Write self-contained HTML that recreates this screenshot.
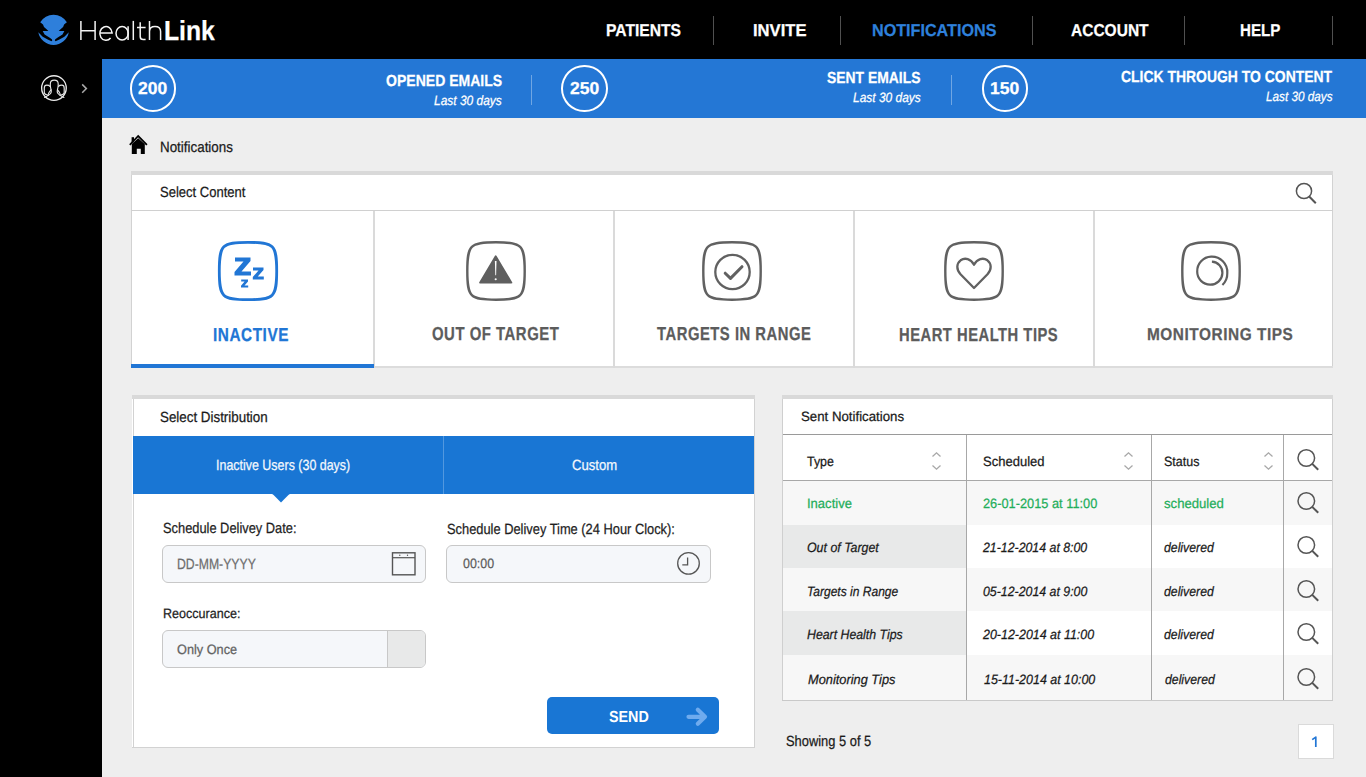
<!DOCTYPE html>
<html><head><meta charset="utf-8"><title>HealthLink Notifications</title>
<style>
html,body{margin:0;padding:0;width:1366px;height:777px;overflow:hidden;background:#eeeeee;}
body{position:relative;font-family:"Liberation Sans",sans-serif;}
.r{position:absolute;box-sizing:content-box;}
.t{position:absolute;white-space:nowrap;transform-origin:0 0;text-rendering:geometricPrecision;-webkit-text-stroke:0.25px currentColor;}
svg.r{overflow:visible;}
</style></head><body>
<div class="r" style="left:0px;top:0px;width:1366px;height:777px;background:#eeeeee;"></div>
<div class="r" style="left:0px;top:0px;width:1366px;height:59px;background:#000;"></div>
<div class="r" style="left:0px;top:59px;width:102px;height:718px;background:#000;"></div>
<div class="r" style="left:102px;top:59px;width:1264px;height:59px;background:#2477d5;"></div>
<svg class="r" style="left:0px;top:0px" width="180" height="59" viewBox="0 0 180 59">
<path fill="#2e7fdb" d="M40.2 22.3 A15.6 15.6 0 0 1 66.9 22.3 L64.1 24.4 L63.1 27.0 L61.1 28.7 L58.7 31.0 L64.4 31.0 L62.5 34.6 L58.1 37.2 L55.3 39.2 L54.8 40.3 L55.5 41.3 L59.4 39.4 L64.4 36.7 L68.8 32.2 A15.5 15.5 0 0 1 38.3 32.2 L42.7 36.7 L47.7 39.4 L51.6 41.3 L52.3 40.3 L51.8 39.2 L49.0 37.2 L44.6 34.6 L42.7 31.0 L48.4 31.0 L46.0 28.7 L44.0 27.0 L43.0 24.4 Z"/>
<g fill="none" stroke="#f4f4f4" stroke-width="1.5">
<path d="M80.9 20.9 V40 M95.1 20.9 V40 M80.9 30.8 H95.1"/>
<path d="M99.8 32.9 H112.1 A6.15 6.9 0 1 0 110.6 38.0"/>
<ellipse cx="122.1" cy="33.3" rx="6.1" ry="6.8"/>
<path d="M128.1 26.3 V40"/>
<path d="M133.3 20.9 V40"/>
<path d="M140.2 22.3 V36.5 Q140.2 39.6 143.2 39.6 H145.6 M137 27.4 H145.6"/>
<path d="M149.5 20.9 V40 M149.5 31.5 Q149.5 26.4 155 26.4 Q160.6 26.4 160.6 31.5 V40"/>
</g>
</svg>
<span class="t" style="left:163.70px;top:17px;font-size:27.5px;line-height:27.5px;color:#ffffff;font-weight:700;transform:scaleX(0.8994);">Link</span>
<span class="t" style="left:606.00px;top:22px;font-size:17.25px;line-height:17.25px;color:#fff;font-weight:700;transform:scaleX(0.9066);">PATIENTS</span>
<span class="t" style="left:752.50px;top:22px;font-size:17.25px;line-height:17.25px;color:#fff;font-weight:700;transform:scaleX(0.9623);">INVITE</span>
<span class="t" style="left:872.30px;top:22px;font-size:17.25px;line-height:17.25px;color:#2e80dc;font-weight:700;transform:scaleX(0.9362);">NOTIFICATIONS</span>
<span class="t" style="left:1071.00px;top:22px;font-size:17.25px;line-height:17.25px;color:#fff;font-weight:700;transform:scaleX(0.8997);">ACCOUNT</span>
<span class="t" style="left:1240.20px;top:22px;font-size:17.25px;line-height:17.25px;color:#fff;font-weight:700;transform:scaleX(0.8782);">HELP</span>
<div class="r" style="left:712.5px;top:16px;width:1px;height:29px;background:#505050;"></div>
<div class="r" style="left:839.5px;top:16px;width:1px;height:29px;background:#505050;"></div>
<div class="r" style="left:1031.5px;top:16px;width:1px;height:29px;background:#505050;"></div>
<div class="r" style="left:1183.5px;top:16px;width:1px;height:29px;background:#505050;"></div>
<div class="r" style="left:1331.5px;top:16px;width:1px;height:29px;background:#505050;"></div>
<svg class="r" style="left:30px;top:65px" width="70" height="45" viewBox="30 65 70 45">
<circle cx="53.95" cy="88.05" r="12.3" fill="none" stroke="#ececec" stroke-width="1.35"/>
<g fill="none" stroke="#e6e6e6" stroke-width="1.15" stroke-linecap="round" stroke-linejoin="round">
<path d="M44.6 97.4 C47.5 95.8 50.6 94.8 51.2 92.2 C51.6 90.5 50.3 88 50.3 85 L50.3 84 C50.3 81.5 52 80.1 54.25 80.1 C56.5 80.1 58.2 81.5 58.2 84 L58.2 85 C58.2 88 56.9 90.5 57.3 92.2 C57.9 94.8 61 95.8 63.9 97.4"/>
<path d="M50 86.3 C49.4 85.5 48.3 85.1 46.7 85.1 C45 85.1 44.3 86.3 44.3 88 L44.3 92.5 C44.3 94 45.3 94.5 46.8 94.8 L48.5 95.4"/>
<path d="M51 89.8 C50 91 48.5 92.5 48.3 94.2"/>
<path d="M58.5 86.3 C59.1 85.5 60.2 85.1 61.8 85.1 C63.5 85.1 64.2 86.3 64.2 88 L64.2 92.5 C64.2 94 63.2 94.5 61.7 94.8 L60 95.4"/>
<path d="M57.5 89.8 C58.5 91 60 92.5 60.2 94.2"/>
</g>
<path d="M82.2 84.4 L86.4 88.6 L82.2 92.8" fill="none" stroke="#a8a8a8" stroke-width="1.5"/>
</svg>
<div class="r" style="left:129.8px;top:65px;width:42.4px;height:42.6px;border:2px solid #fff;border-radius:50%"></div>
<span class="t" style="left:138.40px;top:80px;font-size:17.25px;line-height:17.25px;color:#fff;font-weight:700;transform:scaleX(1.0148);">200</span>
<div class="r" style="left:561.4px;top:65px;width:42.4px;height:42.6px;border:2px solid #fff;border-radius:50%"></div>
<span class="t" style="left:570.00px;top:80px;font-size:17.25px;line-height:17.25px;color:#fff;font-weight:700;transform:scaleX(1.0148);">250</span>
<div class="r" style="left:981.6px;top:65px;width:42.4px;height:42.6px;border:2px solid #fff;border-radius:50%"></div>
<span class="t" style="left:990.20px;top:80px;font-size:17.25px;line-height:17.25px;color:#fff;font-weight:700;transform:scaleX(1.0148);">150</span>
<span class="t" style="left:385.60px;top:74px;font-size:16.0px;line-height:16.0px;color:#fff;font-weight:700;transform:scaleX(0.8772);">OPENED EMAILS</span>
<span class="t" style="left:434.00px;top:94px;font-size:13.5px;line-height:13.5px;color:#fff;font-style:italic;transform:scaleX(0.8858);">Last 30 days</span>
<div class="r" style="left:531px;top:75px;width:1px;height:30px;background:rgba(255,255,255,0.35);"></div>
<span class="t" style="left:827.00px;top:71px;font-size:16.0px;line-height:16.0px;color:#fff;font-weight:700;transform:scaleX(0.8683);">SENT EMAILS</span>
<span class="t" style="left:852.60px;top:91px;font-size:13.5px;line-height:13.5px;color:#fff;font-style:italic;transform:scaleX(0.8858);">Last 30 days</span>
<div class="r" style="left:951px;top:75px;width:1px;height:30px;background:rgba(255,255,255,0.35);"></div>
<span class="t" style="left:1121.00px;top:70px;font-size:16.0px;line-height:16.0px;color:#fff;font-weight:700;transform:scaleX(0.8710);">CLICK THROUGH TO CONTENT</span>
<span class="t" style="left:1265.50px;top:90px;font-size:13.5px;line-height:13.5px;color:#fff;font-style:italic;transform:scaleX(0.8688);">Last 30 days</span>
<svg class="r" style="left:128px;top:134px" width="22" height="22" viewBox="0 0 22 22">
<path d="M1.8 10.8 L10.2 2 L18.9 10.8" fill="none" stroke="#000" stroke-width="1.8"/>
<path d="M3.8 10 L10.2 4.2 L16.8 10 L16.8 20 L12.8 20 L12.8 14.8 L8.8 14.8 L8.8 20 L3.8 20 Z" fill="#000"/>
<rect x="3.6" y="3.2" width="2.4" height="5" fill="#000"/>
</svg>
<span class="t" style="left:160.00px;top:141px;font-size:14.75px;line-height:14.75px;color:#1a1a1a;transform:scaleX(0.9074);">Notifications</span>
<div class="r" style="left:131px;top:171px;width:1202px;height:197px;background:#fff;"></div>
<div class="r" style="left:131px;top:171px;width:1202px;height:4px;background:#d9d9d9;"></div>
<div class="r" style="left:131px;top:175px;width:1px;height:193px;background:#d2d2d2;"></div>
<div class="r" style="left:1332px;top:175px;width:1px;height:193px;background:#d2d2d2;"></div>
<div class="r" style="left:131px;top:210px;width:1202px;height:1px;background:#d0d0d0;"></div>
<div class="r" style="left:131px;top:366px;width:1202px;height:2px;background:#dcdcdc;"></div>
<div class="r" style="left:373px;top:211px;width:2px;height:157px;background:#dadada;"></div>
<div class="r" style="left:613px;top:211px;width:2px;height:157px;background:#dadada;"></div>
<div class="r" style="left:853px;top:211px;width:2px;height:157px;background:#dadada;"></div>
<div class="r" style="left:1093px;top:211px;width:2px;height:157px;background:#dadada;"></div>
<div class="r" style="left:131px;top:364px;width:243px;height:4px;background:#2176d5;"></div>
<span class="t" style="left:159.60px;top:186px;font-size:14.75px;line-height:14.75px;color:#1a1a1a;transform:scaleX(0.8826);">Select Content</span>
<svg class="r" style="left:1292px;top:180px" width="28" height="28" viewBox="0 0 28 28">
<circle cx="12" cy="11" r="7.6" fill="none" stroke="#555" stroke-width="1.5"/>
<path d="M17.2 16.5 L23.8 23.2" stroke="#555" stroke-width="2"/>
</svg>
<svg class="r" style="left:218px;top:241px" width="60" height="60" viewBox="0 0 60 60"><path d="M30 1.3 C56.1 1.3 58.7 3.9 58.7 30 C58.7 56.1 56.1 58.7 30 58.7 C3.9 58.7 1.3 56.1 1.3 30 C1.3 3.9 3.9 1.3 30 1.3 Z" fill="none" stroke="#2176d5" stroke-width="2.8"/><g fill="#2176d5">
<path d="M17 16.5 L32.5 16.5 L32.5 20 L23.5 30.5 L33 30.5 L33 34.5 L16.5 34.5 L16.5 31 L25.5 20.5 L17 20.5 Z"/>
<path d="M35 26.5 L45.5 26.5 L45.5 29 L39.8 35.6 L45.8 35.6 L45.8 38.6 L34.8 38.6 L34.8 36 L40.5 29.5 L35 29.5 Z"/>
<path d="M23.2 38.6 L30 38.6 L30 40.5 L26.5 44.5 L30.2 44.5 L30.2 46.5 L23 46.5 L23 44.8 L26.6 40.6 L23.2 40.6 Z"/>
</g></svg>
<svg class="r" style="left:466px;top:241px" width="60" height="60" viewBox="0 0 60 60"><path d="M30 1.3 C56.1 1.3 58.7 3.9 58.7 30 C58.7 56.1 56.1 58.7 30 58.7 C3.9 58.7 1.3 56.1 1.3 30 C1.3 3.9 3.9 1.3 30 1.3 Z" fill="none" stroke="#616161" stroke-width="2.4"/><path d="M29.7 15.2 L45.4 41.6 L14 41.6 Z" fill="#5f5f5f" stroke="#5f5f5f" stroke-width="1.8" stroke-linejoin="round"/>
<path d="M28.9 20 L30.5 20 L30.1 34.2 L29.3 34.2 Z" fill="#fff"/><circle cx="29.7" cy="38.2" r="1.05" fill="#fff"/></svg>
<svg class="r" style="left:702px;top:241px" width="60" height="60" viewBox="0 0 60 60"><path d="M30 1.3 C56.1 1.3 58.7 3.9 58.7 30 C58.7 56.1 56.1 58.7 30 58.7 C3.9 58.7 1.3 56.1 1.3 30 C1.3 3.9 3.9 1.3 30 1.3 Z" fill="none" stroke="#616161" stroke-width="2.4"/><circle cx="30.5" cy="31" r="17.2" fill="none" stroke="#616161" stroke-width="2.3"/>
<path d="M23.2 32.2 L28.5 37.4 L40 25.7" fill="none" stroke="#616161" stroke-width="3" stroke-linecap="round" stroke-linejoin="round"/></svg>
<svg class="r" style="left:944px;top:241px" width="60" height="60" viewBox="0 0 60 60"><path d="M30 1.3 C56.1 1.3 58.7 3.9 58.7 30 C58.7 56.1 56.1 58.7 30 58.7 C3.9 58.7 1.3 56.1 1.3 30 C1.3 3.9 3.9 1.3 30 1.3 Z" fill="none" stroke="#616161" stroke-width="2.4"/><path d="M30 47 L16.5 33.2 C12.2 28.8 12.3 22.5 16.6 19.3 C21 16.2 26.8 17.8 30 23.8 C33.2 17.8 39 16.2 43.4 19.3 C47.7 22.5 47.8 28.8 43.5 33.2 Z" fill="none" stroke="#616161" stroke-width="2.3" stroke-linejoin="round"/></svg>
<svg class="r" style="left:1181px;top:241px" width="60" height="60" viewBox="0 0 60 60"><path d="M30 1.3 C56.1 1.3 58.7 3.9 58.7 30 C58.7 56.1 56.1 58.7 30 58.7 C3.9 58.7 1.3 56.1 1.3 30 C1.3 3.9 3.9 1.3 30 1.3 Z" fill="none" stroke="#616161" stroke-width="2.4"/><path d="M30.9 20.6 A11 11 0 0 1 41.4 32.1 A12 12 0 0 1 29.3 43.7 A13 13 0 0 1 16.2 30.6 A14.5 14.5 0 0 1 30.1 15.7 A15.5 15.5 0 0 1 46.3 32.1 A16 16 0 0 1 41.4 44" fill="none" stroke="#5f5f5f" stroke-width="2.2"/></svg>
<span class="t" style="left:213.30px;top:326px;font-size:18.75px;line-height:18.75px;color:#2176d5;font-weight:700;transform:scaleX(0.8187);letter-spacing:0.656px;">INACTIVE</span>
<span class="t" style="left:432.00px;top:325px;font-size:18.75px;line-height:18.75px;color:#5c5c5c;font-weight:700;transform:scaleX(0.7945);letter-spacing:0.656px;">OUT OF TARGET</span>
<span class="t" style="left:656.80px;top:325px;font-size:18.75px;line-height:18.75px;color:#5c5c5c;font-weight:700;transform:scaleX(0.7895);letter-spacing:0.656px;">TARGETS IN RANGE</span>
<span class="t" style="left:899.30px;top:326px;font-size:18.75px;line-height:18.75px;color:#5c5c5c;font-weight:700;transform:scaleX(0.7863);letter-spacing:0.656px;">HEART HEALTH TIPS</span>
<span class="t" style="left:1146.50px;top:326px;font-size:17.25px;line-height:17.25px;color:#5c5c5c;font-weight:700;transform:scaleX(0.8923);letter-spacing:0.604px;">MONITORING TIPS</span>
<div class="r" style="left:132px;top:395px;width:623px;height:353px;background:#fff;"></div>
<div class="r" style="left:132px;top:395px;width:623px;height:4px;background:#d9d9d9;"></div>
<div class="r" style="left:133px;top:399px;width:1px;height:349px;background:#d2d2d2;"></div>
<div class="r" style="left:754px;top:399px;width:1px;height:349px;background:#d2d2d2;"></div>
<div class="r" style="left:132px;top:747px;width:623px;height:1px;background:#d2d2d2;"></div>
<span class="t" style="left:159.60px;top:411px;font-size:14.75px;line-height:14.75px;color:#1a1a1a;transform:scaleX(0.9060);">Select Distribution</span>
<div class="r" style="left:133px;top:436px;width:621px;height:58px;background:#1976d4;"></div>
<div class="r" style="left:443px;top:436px;width:1px;height:58px;background:rgba(255,255,255,0.25);"></div>
<svg class="r" style="left:272px;top:493px" width="18" height="10" viewBox="0 0 18 10"><path d="M0.6 1 L17.4 1 L9 9.6 Z" fill="#1976d4"/><rect x="0" y="0" width="18" height="1.2" fill="#1976d4"/></svg>
<span class="t" style="left:215.90px;top:459px;font-size:14.75px;line-height:14.75px;color:#f4f8fd;transform:scaleX(0.8438);">Inactive Users (30 days)</span>
<span class="t" style="left:571.50px;top:459px;font-size:14.75px;line-height:14.75px;color:#f4f8fd;transform:scaleX(0.8895);">Custom</span>
<span class="t" style="left:162.70px;top:522px;font-size:14.75px;line-height:14.75px;color:#1e1e1e;transform:scaleX(0.8707);">Schedule Delivey Date:</span>
<span class="t" style="left:447.00px;top:523px;font-size:14.75px;line-height:14.75px;color:#1e1e1e;transform:scaleX(0.8715);">Schedule Delivey Time (24 Hour Clock):</span>
<div class="r" style="left:162px;top:545px;width:262px;height:36px;border:1px solid #c8c8c8;border-radius:6px;background:#f5f7fa"></div>
<div class="r" style="left:446px;top:544.5px;width:263px;height:36px;border:1px solid #c8c8c8;border-radius:6px;background:#f5f7fa"></div>
<span class="t" style="left:177.40px;top:558px;font-size:14.75px;line-height:14.75px;color:#6e6e6e;transform:scaleX(0.8290);">DD-MM-YYYY</span>
<span class="t" style="left:462.60px;top:557px;font-size:13.5px;line-height:13.5px;color:#5e5e5e;transform:scaleX(0.9207);">00:00</span>
<svg class="r" style="left:390px;top:550px" width="28" height="28" viewBox="0 0 28 28">
<rect x="2.5" y="2.8" width="22.5" height="22" fill="none" stroke="#555" stroke-width="1.4"/>
<path d="M2.5 7.7 L25 7.7" stroke="#555" stroke-width="1.2"/>
<circle cx="9.8" cy="5.3" r="0.7" fill="#555"/><circle cx="17.5" cy="5.3" r="0.7" fill="#555"/>
</svg>
<svg class="r" style="left:675px;top:550px" width="28" height="28" viewBox="0 0 28 28">
<circle cx="13.5" cy="13.4" r="10.8" fill="none" stroke="#555" stroke-width="1.3"/>
<path d="M12.6 7.6 L12.6 14.8 L7.3 14.8" fill="none" stroke="#555" stroke-width="1.3"/>
</svg>
<span class="t" style="left:162.70px;top:607px;font-size:13.5px;line-height:13.5px;color:#1e1e1e;transform:scaleX(0.9304);">Reoccurance:</span>
<div class="r" style="left:162px;top:630.4px;width:262px;height:35.5px;border:1px solid #c8c8c8;border-radius:6px;background:#f5f7fa;overflow:hidden"><div style="position:absolute;left:224px;top:0;width:38px;height:36px;background:#e8e9e9;border-left:1px solid #c8c8c8"></div></div>
<span class="t" style="left:177.40px;top:643px;font-size:13.5px;line-height:13.5px;color:#636363;transform:scaleX(0.9424);">Only Once</span>
<div class="r" style="left:546.7px;top:697.2px;width:172px;height:37px;border-radius:5px;background:#1976d4"></div>
<span class="t" style="left:609.00px;top:710px;font-size:16.0px;line-height:16.0px;color:#fff;font-weight:700;transform:scaleX(0.8943);-webkit-text-stroke:0;">SEND</span>
<svg class="r" style="left:684px;top:705px" width="26" height="24" viewBox="0 0 26 24">
<path d="M4.5 11.8 L20.5 11.8 M13.8 4.8 L21 11.8 L13.8 18.8" fill="none" stroke="#6fabee" stroke-width="4.2" stroke-linecap="round" stroke-linejoin="round"/>
</svg>
<div class="r" style="left:782px;top:395px;width:551px;height:306px;background:#fff;"></div>
<div class="r" style="left:782px;top:395px;width:551px;height:4px;background:#d9d9d9;"></div>
<div class="r" style="left:782px;top:399px;width:1px;height:302px;background:#cfcfcf;"></div>
<div class="r" style="left:1332px;top:399px;width:1px;height:302px;background:#cfcfcf;"></div>
<span class="t" style="left:800.90px;top:410px;font-size:13.5px;line-height:13.5px;color:#1a1a1a;transform:scaleX(0.9814);">Sent Notifications</span>
<div class="r" style="left:783px;top:434px;width:549px;height:1px;background:#9a9a9a;"></div>
<div class="r" style="left:783px;top:481px;width:549px;height:43.5px;background:#f7f7f7;"></div>
<div class="r" style="left:783px;top:524.5px;width:183.5px;height:43.0px;background:#e8e9e9;"></div>
<div class="r" style="left:783px;top:567.5px;width:549px;height:43.5px;background:#f7f7f7;"></div>
<div class="r" style="left:783px;top:611px;width:183.5px;height:44px;background:#e8e9e9;"></div>
<div class="r" style="left:783px;top:655px;width:549px;height:45px;background:#f7f7f7;"></div>
<div class="r" style="left:783px;top:480px;width:549px;height:1px;background:#a8a8a8;"></div>
<div class="r" style="left:782px;top:700px;width:551px;height:1px;background:#c9c9c9;"></div>
<div class="r" style="left:966px;top:435px;width:1px;height:265px;background:#a8a8a8;"></div>
<div class="r" style="left:1151px;top:435px;width:1px;height:265px;background:#a8a8a8;"></div>
<div class="r" style="left:1283px;top:435px;width:1px;height:265px;background:#a8a8a8;"></div>
<span class="t" style="left:807.30px;top:455px;font-size:13.5px;line-height:13.5px;color:#1a1a1a;transform:scaleX(0.9191);">Type</span>
<span class="t" style="left:982.80px;top:455px;font-size:13.5px;line-height:13.5px;color:#1a1a1a;transform:scaleX(0.9639);">Scheduled</span>
<span class="t" style="left:1164.40px;top:455px;font-size:13.5px;line-height:13.5px;color:#1a1a1a;transform:scaleX(0.9249);">Status</span>
<svg class="r" style="left:931px;top:450px" width="12" height="22" viewBox="0 0 12 22"><path d="M1.5 6.5 L5.5 2.8 L9.5 6.5 M1.5 15.5 L5.5 19.2 L9.5 15.5" fill="none" stroke="#a8a8a8" stroke-width="1.3"/></svg>
<svg class="r" style="left:1123px;top:450px" width="12" height="22" viewBox="0 0 12 22"><path d="M1.5 6.5 L5.5 2.8 L9.5 6.5 M1.5 15.5 L5.5 19.2 L9.5 15.5" fill="none" stroke="#a8a8a8" stroke-width="1.3"/></svg>
<svg class="r" style="left:1262.8px;top:450px" width="12" height="22" viewBox="0 0 12 22"><path d="M1.5 6.5 L5.5 2.8 L9.5 6.5 M1.5 15.5 L5.5 19.2 L9.5 15.5" fill="none" stroke="#a8a8a8" stroke-width="1.3"/></svg>
<svg class="r" style="left:1294px;top:446px" width="28" height="28" viewBox="0 0 28 28"><circle cx="12.3" cy="12" r="8.3" fill="none" stroke="#555" stroke-width="1.5"/><path d="M18 17.6 L24.2 23.8" stroke="#555" stroke-width="2"/></svg>
<span class="t" style="left:807.30px;top:497px;font-size:13.5px;line-height:13.5px;color:#1fae5a;transform:scaleX(0.9652);">Inactive</span>
<span class="t" style="left:982.80px;top:497px;font-size:13.5px;line-height:13.5px;color:#1fae5a;transform:scaleX(0.9478);">26-01-2015 at 11:00</span>
<span class="t" style="left:1164.40px;top:497px;font-size:13.5px;line-height:13.5px;color:#1fae5a;transform:scaleX(0.9732);">scheduled</span>
<svg class="r" style="left:1294px;top:488.5px" width="28" height="28" viewBox="0 0 28 28"><circle cx="12.3" cy="12" r="8.3" fill="none" stroke="#555" stroke-width="1.5"/><path d="M18 17.6 L24.2 23.8" stroke="#555" stroke-width="2"/></svg>
<span class="t" style="left:807.30px;top:541px;font-size:13.5px;line-height:13.5px;color:#1a1a1a;font-style:italic;transform:scaleX(0.9166);">Out of Target</span>
<span class="t" style="left:982.87px;top:541px;font-size:13.5px;line-height:13.5px;color:#1a1a1a;font-style:italic;transform:scaleX(0.9136);">21-12-2014 at 8:00</span>
<span class="t" style="left:1164.40px;top:541px;font-size:13.5px;line-height:13.5px;color:#1a1a1a;font-style:italic;transform:scaleX(0.9085);">delivered</span>
<svg class="r" style="left:1294px;top:532.5px" width="28" height="28" viewBox="0 0 28 28"><circle cx="12.3" cy="12" r="8.3" fill="none" stroke="#555" stroke-width="1.5"/><path d="M18 17.6 L24.2 23.8" stroke="#555" stroke-width="2"/></svg>
<span class="t" style="left:807.30px;top:585px;font-size:13.5px;line-height:13.5px;color:#1a1a1a;font-style:italic;transform:scaleX(0.8914);">Targets in Range</span>
<span class="t" style="left:982.80px;top:585px;font-size:13.5px;line-height:13.5px;color:#1a1a1a;font-style:italic;transform:scaleX(0.9142);">05-12-2014 at 9:00</span>
<span class="t" style="left:1164.40px;top:585px;font-size:13.5px;line-height:13.5px;color:#1a1a1a;font-style:italic;transform:scaleX(0.9085);">delivered</span>
<svg class="r" style="left:1294px;top:576.5px" width="28" height="28" viewBox="0 0 28 28"><circle cx="12.3" cy="12" r="8.3" fill="none" stroke="#555" stroke-width="1.5"/><path d="M18 17.6 L24.2 23.8" stroke="#555" stroke-width="2"/></svg>
<span class="t" style="left:807.30px;top:628px;font-size:13.5px;line-height:13.5px;color:#1a1a1a;font-style:italic;transform:scaleX(0.9121);">Heart Health Tips</span>
<span class="t" style="left:982.87px;top:628px;font-size:13.5px;line-height:13.5px;color:#1a1a1a;font-style:italic;transform:scaleX(0.9215);">20-12-2014 at 11:00</span>
<span class="t" style="left:1164.40px;top:628px;font-size:13.5px;line-height:13.5px;color:#1a1a1a;font-style:italic;transform:scaleX(0.9085);">delivered</span>
<svg class="r" style="left:1294px;top:619.5px" width="28" height="28" viewBox="0 0 28 28"><circle cx="12.3" cy="12" r="8.3" fill="none" stroke="#555" stroke-width="1.5"/><path d="M18 17.6 L24.2 23.8" stroke="#555" stroke-width="2"/></svg>
<span class="t" style="left:808.10px;top:673px;font-size:13.5px;line-height:13.5px;color:#1a1a1a;font-style:italic;transform:scaleX(0.9483);">Monitoring Tips</span>
<span class="t" style="left:983.60px;top:673px;font-size:13.5px;line-height:13.5px;color:#1a1a1a;font-style:italic;transform:scaleX(0.9229);">15-11-2014 at 10:00</span>
<span class="t" style="left:1165.00px;top:673px;font-size:13.5px;line-height:13.5px;color:#1a1a1a;font-style:italic;transform:scaleX(0.9085);">delivered</span>
<svg class="r" style="left:1294px;top:664.5px" width="28" height="28" viewBox="0 0 28 28"><circle cx="12.3" cy="12" r="8.3" fill="none" stroke="#555" stroke-width="1.5"/><path d="M18 17.6 L24.2 23.8" stroke="#555" stroke-width="2"/></svg>
<span class="t" style="left:785.80px;top:735px;font-size:14.75px;line-height:14.75px;color:#1a1a1a;transform:scaleX(0.8731);">Showing 5 of 5</span>
<div class="r" style="left:1298px;top:724px;width:33.5px;height:33px;background:#fff;border:1px solid #dadada"></div>
<svg class="r" style="left:1305px;top:732px" width="20" height="20" viewBox="0 0 20 20"><path d="M7.2 7.6 L10.8 5.1 L10.8 15" fill="none" stroke="#2176d5" stroke-width="1.7" stroke-linejoin="round"/></svg>
</body></html>
